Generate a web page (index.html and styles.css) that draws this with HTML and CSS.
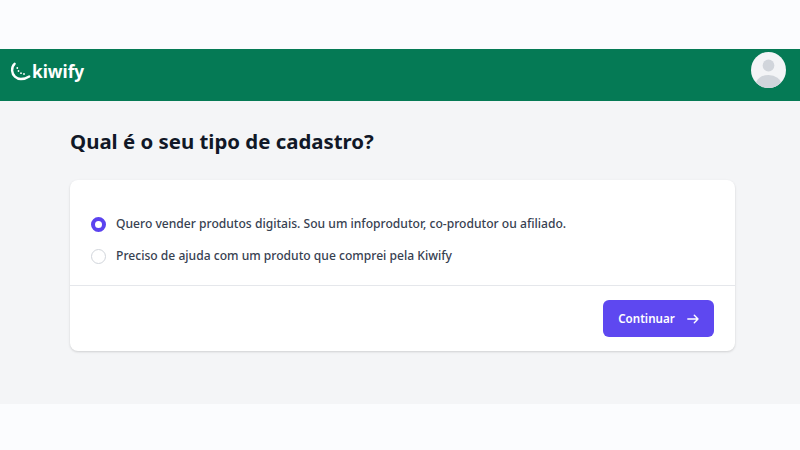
FILE: index.html
```html
<!DOCTYPE html>
<html lang="pt">
<head>
<meta charset="utf-8">
<title>Kiwify</title>
<link rel="stylesheet" href="styles.css">
</head>
<body>
<div class="strip-top"></div>
<header class="topbar">
  <div class="logo">
    <svg class="logo-mark" width="21" height="22" viewBox="0 0 21 22" fill="none">
      <path d="M4.600 1.800C2.800 3.400 1.900 6 2.100 8.600c.4 4.900 4.200 8.400 8.800 8.400 3.200 0 5.800-.9 8.300-2.600" stroke="#fff" stroke-width="2.400" stroke-linecap="round"/>
      <circle cx="7.300" cy="6" r=".9" fill="#fff"/>
      <circle cx="8.500" cy="9" r=".9" fill="#fff"/>
      <circle cx="11" cy="11.200" r=".9" fill="#fff"/>
      <circle cx="14" cy="12" r=".9" fill="#fff"/>
    </svg>
    <span class="logo-text">kiwify</span>
  </div>
  <svg class="avatar" width="35" height="36" viewBox="0 0 36 36" preserveAspectRatio="none">
    <defs><clipPath id="av"><circle cx="18" cy="18" r="18"/></clipPath></defs>
    <circle cx="18" cy="18" r="18" fill="#f3f4f6"/>
    <g clip-path="url(#av)" fill="#d1d5db">
      <circle cx="18" cy="13.500" r="6"/>
      <ellipse cx="18" cy="32" rx="13" ry="9"/>
    </g>
  </svg>
</header>
<main class="content">
  <h1 class="title">Qual é o seu tipo de cadastro?</h1>
  <section class="card">
    <div class="options">
      <label class="option"><span class="radio radio-on"></span><span>Quero vender produtos digitais. Sou um infoprodutor, co-produtor ou afiliado.</span></label>
      <label class="option"><span class="radio"></span><span>Preciso de ajuda com um produto que comprei pela Kiwify</span></label>
    </div>
    <div class="actions">
      <button class="btn" type="button">Continuar
        <svg width="12" height="10" viewBox="0 0 12 10" fill="none"><path d="M.8 5h10.200M7.300 1.200 11 5 7.300 8.800" stroke="#fff" stroke-width="1.400" stroke-linecap="round" stroke-linejoin="round"/></svg>
      </button>
    </div>
  </section>
</main>
</body>
</html>
```
FILE: styles.css
```css
* { box-sizing: border-box; }
html, body { margin: 0; height: 100%; }
body {
  background: #fbfcfe;
  font-family: "Noto Sans", "Open Sans", sans-serif;
  overflow: hidden;
}
.strip-top { height: 49px; }
.topbar {
  height: 52px;
  background: #057a55;
  display: flex;
  align-items: flex-start;
  justify-content: space-between;
  padding: 3px 14px 0 10px;
}
.logo { display: flex; align-items: flex-start; gap: 1px; margin-top: 10px; }
.logo-mark { display: block; }
.logo-text {
  color: #fff;
  font-size: 17.200px;
  font-weight: 700;
  line-height: 19px;
}
.avatar { display: block; }
.content {
  height: 303px;
  background: #f4f5f7;
  padding: 26px 65px 0 70px;
}
.title {
  margin: 0 0 24px;
  font-size: 20.400px;
  line-height: 29px;
  font-weight: 700;
  color: #111827;
}
.card {
  background: #fff;
  border-radius: 8px;
  box-shadow: 0 1px 3px rgba(0,0,0,.1), 0 1px 2px rgba(0,0,0,.06);
}
.options {
  padding: 34px 21px 19px;
  display: flex;
  flex-direction: column;
  gap: 12px;
  border-bottom: 1px solid #e5e7eb;
}
.option {
  display: flex;
  align-items: center;
  gap: 10px;
  font-size: 12.100px;
  line-height: 20px;
  font-weight: 500;
  color: #374151;
}
.radio {
  width: 15px;
  height: 15px;
  border-radius: 50%;
  background: #fff;
  border: 1px solid #d1d5db;
  flex: none;
}
.radio-on { border: 4px solid #5b43ef; }
.actions {
  padding: 14px 21px;
  display: flex;
  justify-content: flex-end;
}
.btn {
  width: 111px;
  height: 37px;
  border: 0;
  border-radius: 6px;
  background: #5e48f0;
  color: #fff;
  font: 600 11.600px/20px "Noto Sans", "Open Sans", sans-serif;
  display: flex;
  align-items: center;
  justify-content: center;
  gap: 12px;
  padding: 0;
}
```
